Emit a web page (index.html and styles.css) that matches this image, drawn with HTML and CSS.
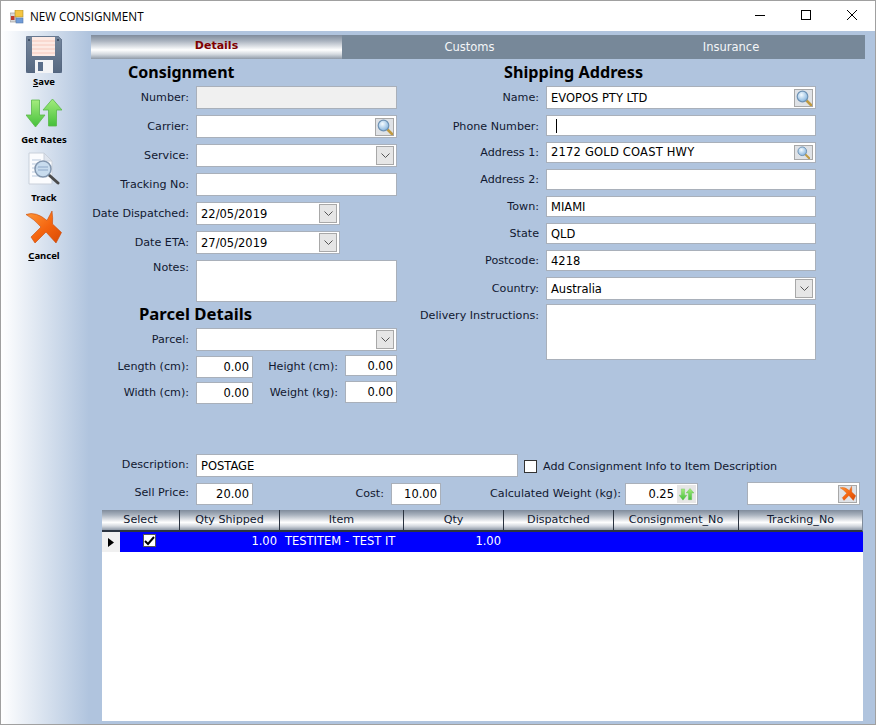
FILE: index.html
```html
<!DOCTYPE html>
<html lang="en">
<head>
<meta charset="utf-8">
<title>NEW CONSIGNMENT</title>
<link rel="stylesheet" href="styles.css">
</head>
<body>
<svg class="defs" width="0" height="0" aria-hidden="true">
  <defs>
    <linearGradient id="gFloppy" x1="0" y1="0" x2="0" y2="1"><stop offset="0" stop-color="#75869c"/><stop offset="1" stop-color="#566880"/></linearGradient>
    <linearGradient id="gGreen" x1="0" y1="0" x2="0" y2="1"><stop offset="0" stop-color="#a4ec7e"/><stop offset="1" stop-color="#45c03a"/></linearGradient>
    <linearGradient id="gOrange" x1="0" y1="0" x2="1" y2="1"><stop offset="0" stop-color="#ff9a3a"/><stop offset=".55" stop-color="#f4640f"/><stop offset="1" stop-color="#d84a05"/></linearGradient>
    <radialGradient id="gLens" cx=".4" cy=".35" r=".7"><stop offset="0" stop-color="#f4fbff"/><stop offset="1" stop-color="#7fb0dc"/></radialGradient>
    <symbol id="i-arrows" viewBox="0 0 36 29">
      <path d="M5.5 1h8v15H19L9.500 28 0 16h5.500z" fill="url(#gGreen)" stroke="#5bb84a" stroke-width=".8"/>
      <path d="M26.500 0 36 11h-5.500v16h-8V11H17z" fill="url(#gGreen)" stroke="#5bb84a" stroke-width=".8"/>
    </symbol>
    <symbol id="i-cancel" viewBox="0 0 36 33">
      <path d="M0 3.500Q10 0 21 9.500L26 0Q27 7 26.500 13L35.500 21.500 30 32 20 21 9 32 5 26 15 16Q8 8 0 3.500z" fill="url(#gOrange)" stroke="#c94a08" stroke-width=".6" stroke-linejoin="round"/>
    </symbol>
    <symbol id="i-lens" viewBox="0 0 16 16">
      <line x1="10" y1="10" x2="15" y2="15" stroke="#c09a40" stroke-width="2.600" stroke-linecap="round"/>
      <circle cx="6.500" cy="6.500" r="5.300" fill="url(#gLens)" stroke="#6f93b5" stroke-width="1.200"/>
    </symbol>
    <symbol id="i-chev" viewBox="0 0 9 5">
      <path d="M.5.5l4 4 4-4" fill="none" stroke="#555"/>
    </symbol>
  </defs>
</svg>
<div class="window">
  <header class="titlebar">
    <svg class="app-icon" viewBox="0 0 14 14" width="14" height="14" aria-hidden="true">
      <rect x="0" y="3" width="6" height="9" fill="#d9d9d9" stroke="#8c8c8c" stroke-width=".6"/>
      <rect x="1" y="6" width="3.500" height="4" fill="#c0392b"/>
      <rect x="5" y="0" width="8" height="7" fill="#f5c542" stroke="#a8892b" stroke-width=".6"/>
      <rect x="6" y="8" width="7" height="5" fill="#6f9bd8" stroke="#557aa8" stroke-width=".6"/>
    </svg>
    <span class="title-text">NEW CONSIGNMENT</span>
    <div class="win-controls">
      <svg class="win-btn" viewBox="0 0 46 30" width="46" height="30" aria-hidden="true"><line x1="18" y1="14.500" x2="28" y2="14.500" stroke="#000"/></svg>
      <svg class="win-btn" viewBox="0 0 46 30" width="46" height="30" aria-hidden="true"><rect x="18.500" y="9.500" width="9" height="9" fill="none" stroke="#000"/></svg>
      <svg class="win-btn" viewBox="0 0 46 30" width="46" height="30" aria-hidden="true"><path d="M18 9l10 10M28 9L18 19" stroke="#000" fill="none"/></svg>
    </div>
  </header>
  <div class="body">
    <nav class="sidebar">
      <div class="tool tool-save">
        <svg viewBox="0 0 36 37" width="36" height="37" aria-hidden="true">
          <path d="M2 0h30l4 4v31a2 2 0 0 1-2 2H2a2 2 0 0 1-2-2V2a2 2 0 0 1 2-2z" fill="url(#gFloppy)" stroke="#4a5d78" stroke-width=".6"/>
          <rect x="6" y="1" width="23" height="19" fill="#fdeae4"/>
          <path d="M6 5h23M6 9h23M6 13h23M6 17h23" stroke="#f6c8bc" stroke-width="1"/>
          <rect x="2" y="3" width="2" height="2" fill="#3f4f66"/>
          <rect x="31" y="3" width="2" height="2" fill="#3f4f66"/>
          <rect x="9" y="24" width="18" height="13" fill="#f3f4f6"/>
          <rect x="12" y="26" width="5" height="9" fill="#5a6e8a"/>
        </svg>
        <span class="tool-label"><u>S</u>ave</span>
      </div>
      <div class="tool tool-rates">
        <svg width="36" height="29" aria-hidden="true"><use href="#i-arrows"/></svg>
        <span class="tool-label">Get Rates</span>
      </div>
      <div class="tool tool-track">
        <svg viewBox="0 0 32 35" width="32" height="35" aria-hidden="true">
          <path d="M1 1h15l8 8v23H1z" fill="#fbfcfe" stroke="#c9d0da"/>
          <path d="M16 1v8h8z" fill="#dfe5ee" stroke="#c9d0da"/>
          <path d="M4 8h9M4 12h7M4 16h6M4 20h6M4 24h8" stroke="#b9c9dd"/>
          <line x1="21" y1="23" x2="30" y2="31" stroke="#4a4a4a" stroke-width="3" stroke-linecap="round"/>
          <circle cx="15" cy="17" r="8" fill="#bcd3ea" fill-opacity=".8" stroke="#8296ae" stroke-width="1.500"/>
          <path d="M10 15h10M10 18h10" stroke="#8ea8c8"/>
        </svg>
        <span class="tool-label">Track</span>
      </div>
      <div class="tool tool-cancel">
        <svg width="36" height="33" aria-hidden="true"><use href="#i-cancel"/></svg>
        <span class="tool-label"><u>C</u>ancel</span>
      </div>
    </nav>
    <main class="main">
      <div class="tabs">
        <div class="tab tab-active tab-details">Details</div>
        <div class="tab tab-customs">Customs</div>
        <div class="tab tab-insurance">Insurance</div>
      </div>
      <div class="columns">
        <section class="col col-left">
          <h2 class="heading heading-consignment">Consignment</h2>
          <div class="row first"><label class="lab">Number:</label><div class="box h23 w-full disabled"></div></div>
          <div class="row"><label class="lab">Carrier:</label><div class="box h23 w-full"><span></span><span class="btn-search"><svg width="16" height="16" aria-hidden="true"><use href="#i-lens"/></svg></span></div></div>
          <div class="row"><label class="lab">Service:</label><div class="box h23 w-full"><span></span><span class="btn-drop"><svg width="9" height="5" aria-hidden="true"><use href="#i-chev"/></svg></span></div></div>
          <div class="row"><label class="lab">Tracking No:</label><div class="box h23 w-full"></div></div>
          <div class="row"><label class="lab">Date Dispatched:</label><div class="box h23 w-date"><span>22/05/2019</span><span class="btn-drop"><svg width="9" height="5" aria-hidden="true"><use href="#i-chev"/></svg></span></div></div>
          <div class="row"><label class="lab">Date ETA:</label><div class="box h23 w-date"><span>27/05/2019</span><span class="btn-drop"><svg width="9" height="5" aria-hidden="true"><use href="#i-chev"/></svg></span></div></div>
          <div class="row row-top row-notes"><label class="lab">Notes:</label><div class="box h42 w-full"></div></div>
          <h2 class="heading heading-parcel">Parcel Details</h2>
          <div class="row first"><label class="lab">Parcel:</label><div class="box h23 w-full"><span></span><span class="btn-drop"><svg width="9" height="5" aria-hidden="true"><use href="#i-chev"/></svg></span></div></div>
          <div class="row row-dim">
            <label class="lab">Length (cm):</label>
            <div class="box h22 w-57 num nudge">0.00</div>
            <label class="lab-mid">Height (cm):</label>
            <div class="box h21 w-52 num">0.00</div>
          </div>
          <div class="row row-dim">
            <label class="lab">Width (cm):</label>
            <div class="box h22 w-57 num nudge">0.00</div>
            <label class="lab-mid">Weight (kg):</label>
            <div class="box h22 w-52 num">0.00</div>
          </div>
        </section>
        <section class="col col-right">
          <h2 class="heading heading-shipping">Shipping Address</h2>
          <div class="row first"><label class="lab lab-r">Name:</label><div class="box h23 w-addr"><span>EVOPOS PTY LTD</span><span class="btn-search"><svg width="16" height="16" aria-hidden="true"><use href="#i-lens"/></svg></span></div></div>
          <div class="row"><label class="lab lab-r lab-low">Phone Number:</label><div class="box h21 w-addr"><span class="caret"></span></div></div>
          <div class="row"><label class="lab lab-r">Address 1:</label><div class="box h21 w-addr"><span class="wide-text">2172 GOLD COAST HWY</span><span class="btn-search btn-search-low"><svg width="13" height="13" aria-hidden="true"><use href="#i-lens"/></svg></span></div></div>
          <div class="row"><label class="lab lab-r">Address 2:</label><div class="box h21 w-addr"></div></div>
          <div class="row"><label class="lab lab-r">Town:</label><div class="box h21 w-addr"><span>MIAMI</span></div></div>
          <div class="row"><label class="lab lab-r">State</label><div class="box h21 w-addr"><span>QLD</span></div></div>
          <div class="row"><label class="lab lab-r">Postcode:</label><div class="box h21 w-addr"><span>4218</span></div></div>
          <div class="row"><label class="lab lab-r">Country:</label><div class="box h23 w-addr"><span>Australia</span><span class="btn-drop"><svg width="9" height="5" aria-hidden="true"><use href="#i-chev"/></svg></span></div></div>
          <div class="row tight row-top row-delivery"><label class="lab lab-r">Delivery Instructions:</label><div class="box h56 w-addr"></div></div>
        </section>
      </div>
      <div class="desc-row">
        <label class="lab lab-raise">Description:</label>
        <div class="box h23 w-desc"><span>POSTAGE</span></div>
        <span class="check"></span>
        <span class="check-text">Add Consignment Info to Item Description</span>
      </div>
      <div class="price-row">
        <label class="lab lab-raise-more">Sell Price:</label>
        <div class="box h22 w-57 num">20.00</div>
        <label class="lab-cost">Cost:</label>
        <div class="box h22 w-50 num">10.00</div>
        <label class="lab-weight">Calculated Weight (kg):</label>
        <div class="box h22 w-73 weight-box"><span class="weight-val">0.25</span><span class="btn-small"><svg width="15" height="13" aria-hidden="true"><use href="#i-arrows"/></svg></span></div>
        <div class="box h23 w-113 clear-box"><span></span><span class="btn-search"><svg width="16" height="15" aria-hidden="true"><use href="#i-cancel"/></svg></span></div>
      </div>
      <div class="grid">
        <div class="grid-head">
          <div class="gh">Select</div>
          <div class="gh">Qty Shipped</div>
          <div class="gh">Item</div>
          <div class="gh">Qty</div>
          <div class="gh">Dispatched</div>
          <div class="gh">Consignment_No</div>
          <div class="gh gh-last">Tracking_No</div>
        </div>
        <div class="grid-row">
          <div class="gc gc-select"><span class="row-head"><svg width="6" height="9" viewBox="0 0 6 9" aria-hidden="true"><path d="M0 0l6 4.500L0 9z" fill="#000"/></svg></span><span class="cell-check"><svg width="11" height="10" viewBox="0 0 11 10" aria-hidden="true"><path d="M1 5l3 3 6-7" fill="none" stroke="#000" stroke-width="2"/></svg></span></div>
          <div class="gc gc-right">1.00</div>
          <div class="gc gc-item">TESTITEM - TEST IT</div>
          <div class="gc gc-right">1.00</div>
          <div class="gc"></div>
          <div class="gc"></div>
          <div class="gc"></div>
        </div>
      </div>
    </main>
  </div>
</div>
</body>
</html>
```

FILE: styles.css
```css
* { box-sizing: border-box; }
html, body { margin: 0; padding: 0; }
body {
  font-family: "DejaVu Sans", Verdana, sans-serif;
  font-size: 11.150px;
  color: #101830;
  background: #fff;
}
.defs { position: absolute; }
.window {
  width: 876px;
  height: 725px;
  border: 1px solid #a0a0a0;
  display: flex;
  flex-direction: column;
  overflow: hidden;
  background: #b0c4de;
}
.titlebar {
  height: 30px;
  background: #fff;
  display: flex;
  align-items: center;
  padding-left: 9px;
  flex: none;
}
.app-icon { margin-top: 1px; }
.title-text {
  font-family: "Open Sans", "Noto Sans", sans-serif;
  font-size: 11.700px;
  color: #000;
  margin-left: 6px;
}
.win-controls { margin-left: auto; display: flex; }
.win-btn { display: block; }
.body { flex: 1; display: flex; min-height: 0; }
.sidebar {
  width: 90px;
  flex: none;
  background: linear-gradient(90deg, #fff 0, #b0c4de 88px);
  display: flex;
  flex-direction: column;
  align-items: center;
  padding-right: 4px;
}
.tool { display: flex; flex-direction: column; align-items: center; }
.tool svg { display: block; }
.tool-label {
  font-family: "Noto Sans", "Open Sans", sans-serif;
  font-size: 9.500px;
  font-weight: bold;
  color: #000;
  line-height: 12px;
  white-space: nowrap;
}
.tool-save { margin-top: 5px; }
.tool-save .tool-label { margin-top: 3px; }
.tool-rates { margin-top: 11px; }
.tool-rates .tool-label { margin-top: 6px; }
.tool-track { margin-top: 6px; }
.tool-track .tool-label { margin-top: 5px; }
.tool-cancel { margin-top: 7px; }
.tool-cancel .tool-label { margin-top: 6px; }
.main { flex: 1; padding-top: 4px; min-width: 0; }
.tabs { display: flex; width: 774px; height: 24px; background: #778899; }
.tab { display: flex; align-items: center; justify-content: center; color: #f4f6f8; font-size: 11.500px; }
.tab-details { width: 251px; }
.tab-customs { width: 255px; }
.tab-insurance { width: 268px; }
.tab-active {
  color: #800000;
  font-weight: bold;
  font-size: 11px;
  padding-bottom: 3px;
  background: linear-gradient(180deg, #7f8b9b 0, #aab3bf 25%, #fff 62%, #d5dae0 80%, #8f9aa8 100%);
}
.columns { display: flex; height: 390px; }
.col { display: flex; flex-direction: column; }
.col-left { width: 320px; }
.col-right { width: 420px; }
.heading {
  margin: 0;
  height: 27px;
  font-family: "Noto Sans", "Open Sans", sans-serif;
  font-size: 16px;
  font-weight: bold;
  color: #000;
  line-height: 26px;
  white-space: nowrap;
}
.heading-consignment { padding-left: 37px; }
.heading-parcel { padding-left: 48px; height: 26px; line-height: 24px; font-size: 16.700px; }
.heading-shipping { padding-left: 93px; font-size: 16.200px; }
.row { display: flex; align-items: center; margin-top: 6px; }
.row.first { margin-top: 0; }
.row.tight { margin-top: 4px; }
.row-top { align-items: flex-start; }
.row-notes .lab { padding-top: 1px; }
.row-delivery .lab { padding-top: 5px; }
.row-dim { margin-top: 4px; height: 22px; align-items: flex-start; }
.row-dim .lab, .row-dim .lab-mid { line-height: 22px; }
.row-dim .lab { margin-top: 1px; }
.row-dim .lab-mid { margin-top: 1px; }
.nudge { margin-top: 1px; }
.lab {
  width: 98px;
  flex: none;
  text-align: right;
  margin-right: 7px;
  white-space: nowrap;
}
.lab-r { width: 128px; }
.lab-low { padding-top: 2px; }
.lab-raise { padding-bottom: 2px; }
.lab-raise-more { padding-bottom: 3px; }
.lab-mid { width: 92px; flex: none; text-align: right; white-space: nowrap; padding-right: 7px; }
.box {
  background: #fff;
  border: 1px solid #a9b0ba;
  display: flex;
  align-items: center;
  justify-content: space-between;
  padding: 0 2px 0 4px;
  color: #000;
  flex: none;
  white-space: nowrap;
  font-size: 11.500px;
}
.wide-text { letter-spacing: .2px; margin-bottom: 2px; }
.disabled { background: #f0f0f0; }
.h21 { height: 21px; }
.h22 { height: 22px; }
.h23 { height: 23px; }
.h42 { height: 42px; }
.h56 { height: 56px; }
.w-full { width: 201px; }
.w-date { width: 144px; }
.w-addr { width: 270px; }
.w-57 { width: 57px; }
.w-52 { width: 52px; }
.w-50 { width: 50px; }
.w-73 { width: 73px; }
.w-113 { width: 113px; }
.w-desc { width: 322px; }
.num { justify-content: flex-end; padding-right: 3px; }
.btn-search {
  width: 19px;
  height: 18px;
  background: #dfe2e6;
  border: 1px solid #a8a8a8;
  display: flex;
  align-items: center;
  justify-content: center;
  flex: none;
}
.btn-search-low { height: 15px; }
.btn-drop {
  width: 18px;
  height: 19px;
  background: #e6e6e6;
  border: 1px solid #a8a8a8;
  display: flex;
  align-items: center;
  justify-content: center;
  flex: none;
}
.btn-small {
  width: 19px;
  height: 18px;
  background: #e6e6e6;
  display: flex;
  align-items: center;
  justify-content: center;
  flex: none;
  margin-left: 3px;
}
.caret { display: block; width: 1px; height: 14px; background: #000; margin-left: 5px; }
.desc-row { display: flex; align-items: center; margin-top: 5px; height: 23px; }
.check { width: 13px; height: 13px; background: #fff; border: 1px solid #333; margin-left: 6px; flex: none; margin-top: 1px; }
.check-text { margin-left: 6px; margin-top: 1px; white-space: nowrap; }
.price-row { display: flex; align-items: center; margin-top: 6px; height: 22px; }
.lab-cost { width: 131px; flex: none; text-align: right; margin-right: 7px; padding-bottom: 1px; }
.lab-weight { width: 180px; flex: none; text-align: right; margin-right: 4px; white-space: nowrap; padding-bottom: 1px; }
.weight-box { padding-right: 1px; justify-content: flex-end; }
.clear-box { margin-left: 49px; margin-top: -1px; }
.grid {
  margin: 5px 0 0 11px;
  width: 761px;
  height: 211px;
  background: #fff;
}
.grid-head, .grid-row {
  display: grid;
  grid-template-columns: 78px 100px 124px 100px 110px 125px 124px;
}
.grid-head { height: 22px; }
.gh {
  display: flex;
  align-items: center;
  justify-content: center;
  border-right: 1px solid #2b3440;
  border-bottom: 2px solid #2b3440;
  padding-bottom: 1px;
  background: linear-gradient(180deg, #7f8b9b 0, #aab3bf 25%, #fff 62%, #d5dae0 80%, #8f9aa8 100%);
}
.gh-last { border-right: 1px solid #7f8b9b; }
.grid-row { height: 20px; background: #0000ff; color: #fff; align-items: stretch; font-size: 11.500px; }
.gc { display: flex; align-items: center; padding: 0 3px 2px; white-space: nowrap; }
.gc-right { justify-content: flex-end; }
.gc-item { padding-left: 5px; overflow: hidden; }
.gc-select { padding: 0; align-items: flex-start; }
.row-head {
  width: 18px;
  height: 20px;
  background: #f0f0f0;
  display: flex;
  align-items: center;
  justify-content: center;
  flex: none;
}
.cell-check {
  width: 13px;
  height: 13px;
  background: #fff;
  border: 1px solid #555;
  margin-left: 23px;
  margin-top: 2px;
  display: flex;
  align-items: center;
  justify-content: center;
}
```
